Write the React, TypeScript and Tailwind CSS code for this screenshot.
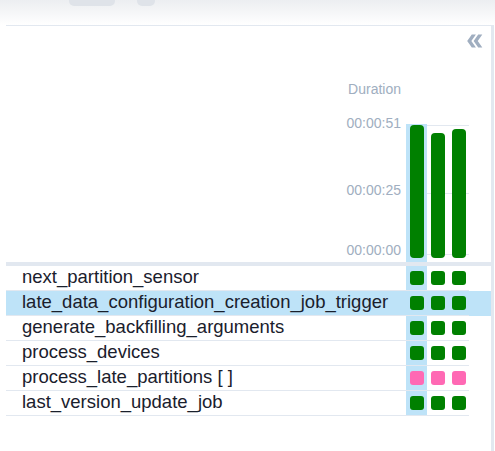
import { MdDoubleArrow } from 'react-icons/md'

type Status = 'success' | 'up_for_reschedule'

interface TaskRow {
  name: string
  instances: Status[]
  selected?: boolean
}

const tasks: TaskRow[] = [
  { name: 'next_partition_sensor', instances: ['success', 'success', 'success'] },
  { name: 'late_data_configuration_creation_job_trigger', instances: ['success', 'success', 'success'], selected: true },
  { name: 'generate_backfilling_arguments', instances: ['success', 'success', 'success'] },
  { name: 'process_devices', instances: ['success', 'success', 'success'] },
  { name: 'process_late_partitions [ ]', instances: ['up_for_reschedule', 'up_for_reschedule', 'up_for_reschedule'] },
  { name: 'last_version_update_job', instances: ['success', 'success', 'success'] },
]

// bar heights in px, max is 133 for 00:00:51
const runs = [133, 125, 129]

function statusColor(status: Status) {
  return status === 'success' ? 'bg-[#008000]' : 'bg-[#ff69b4]'
}

export default function App() {
  return (
    <div className="w-[495px] h-[451px] bg-white overflow-hidden font-['Liberation_Sans',Arial,sans-serif]">
      <div className="h-[25px] overflow-hidden bg-gradient-to-b from-[#eceef1] to-white">
        <div className="flex items-center h-[22px] -mt-[16px] pl-[22px] text-[16px] text-[#1a202c]">
          <span>Press</span>
          <span className="ml-[6px] w-[46px] h-[22px] rounded-[5px] bg-[#dfe3e9]" />
          <span className="ml-[7px]">+</span>
          <span className="ml-[6px] w-[18px] h-[22px] rounded-[5px] bg-[#dfe3e9]" />
          <span className="ml-[6px]">for Shortcuts</span>
        </div>
      </div>

      <div className="ml-[6px] w-[488px] h-[426px] border-t border-r-[3px] border-[#e2e8f0]">
        <div className="h-[30px] flex justify-end items-start pt-[4px] pr-[5px]">
          <MdDoubleArrow size={22} className="rotate-180 text-[#a0aec0]" />
        </div>

        <div className="flex h-[206px]">
          <div className="flex-1 flex flex-col items-end pr-[5px] text-[14px] leading-[16px] text-[#a0aec0]">
            <span className="mt-[25px]">Duration</span>
            <span className="mt-[18px]">00:00:51</span>
            <span className="mt-[51px]">00:00:25</span>
            <span className="mt-[44px]">00:00:00</span>
          </div>
          <div className="flex flex-col justify-end">
            <div className="relative flex h-[138px] pr-[22px]">
              <div className="absolute left-0 right-[22px] top-[1px] h-px bg-[#e2e8f0]" />
              <div className="absolute left-0 right-[22px] top-[69px] h-px bg-[#e2e8f0]" />
              <div className="absolute left-0 right-[22px] top-[130px] h-px bg-[#e2e8f0]" />
              {runs.map((h, i) => (
                <div
                  key={i}
                  className={`relative w-[21px] flex items-end justify-center pb-[4px] ${i === 0 ? 'bg-[#bee3f8]' : ''}`}
                >
                  <div className="w-[14px] rounded-[4px] bg-[#008000]" style={{ height: h }} />
                </div>
              ))}
            </div>
          </div>
        </div>

        <div className="h-[4px] bg-[#e2e8f0]" />

        <div>
          {tasks.map((task) => (
            <div key={task.name} className={`flex h-[25px] ${task.selected ? 'bg-[#bee3f8]' : ''}`}>
              <div className="flex-1 flex items-center pl-[16px] pb-[3px] border-b border-[#e2e8f0] text-[18.5px] text-[#1a202c] whitespace-nowrap">
                {task.name}
              </div>
              {task.instances.map((s, i) => (
                <div
                  key={i}
                  className={`w-[21px] flex items-center justify-center border-b border-[#e2e8f0] ${i === 0 ? 'bg-[#bee3f8]' : ''}`}
                >
                  <div className={`w-[14px] h-[14px] rounded-[3px] ${statusColor(s)}`} />
                </div>
              ))}
              <div className="w-[22px]" />
            </div>
          ))}
        </div>
      </div>
    </div>
  )
}
